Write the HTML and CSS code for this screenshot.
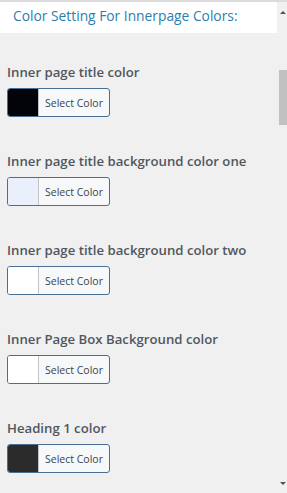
FILE: index.html
```html
<!DOCTYPE html>
<html>
<head>
<meta charset="utf-8">
<link rel="stylesheet" href="styles.css">
</head>
<body>
<div class="frame">
  <div class="main">
    <div class="header">Color Setting For Innerpage Colors:</div>
    <div class="field">
      <div class="label">Inner page title color</div>
      <button class="picker"><span class="swatch" style="background:#02040a"></span><span class="txt">Select Color</span></button>
    </div>
    <div class="field">
      <div class="label">Inner page title background color one</div>
      <button class="picker"><span class="swatch" style="background:#e9f0fb"></span><span class="txt">Select Color</span></button>
    </div>
    <div class="field">
      <div class="label">Inner page title background color two</div>
      <button class="picker"><span class="swatch" style="background:#ffffff"></span><span class="txt">Select Color</span></button>
    </div>
    <div class="field">
      <div class="label">Inner Page Box Background color</div>
      <button class="picker"><span class="swatch" style="background:#ffffff"></span><span class="txt">Select Color</span></button>
    </div>
    <div class="field">
      <div class="label">Heading 1 color</div>
      <button class="picker"><span class="swatch" style="background:#2b2b2b"></span><span class="txt">Select Color</span></button>
    </div>
  </div>
  <div class="scrollbar">
    <div class="arrow up"></div>
    <div class="thumb"></div>
    <div class="spacer"></div>
    <div class="arrow down"></div>
  </div>
</div>
</body>
</html>
```
FILE: styles.css
```css
html, body {
  margin: 0;
  padding: 0;
  background: #f0f0f1;
  height: 493px;
  overflow: hidden;
}
.frame {
  display: flex;
  height: 493px;
  border-top: 2px solid #dcdcde;
  box-sizing: border-box;
  font-family: "Open Sans", "Noto Sans", sans-serif;
}
.main {
  width: 277px;
  flex: none;
}
.header {
  background: #fff;
  height: 31px;
  box-sizing: border-box;
  padding: 5px 0 0 13px;
  color: #2a7fae;
  font-size: 13.8px;
  line-height: 18px;
}
.field {
  padding-left: 7px;
}
.label {
  color: #50575e;
  font-weight: 600;
  font-size: 13.2px;
  line-height: 18px;
  margin-bottom: 7px;
}
.field + .field {
  margin-top: 35px;
}
.field:nth-child(2) {
  padding-top: 30px;
}
.picker {
  display: flex;
  align-items: stretch;
  height: 29px;
  width: 103px;
  padding: 0;
  border: 1px solid #4a6f93;
  border-radius: 3px;
  background: #f6f8fa;
  overflow: hidden;
  font-family: inherit;
  cursor: pointer;
}
.swatch {
  width: 30px;
  flex: none;
  border-right: 1px solid #c3c4c7;
}
.txt {
  flex: 1;
  display: flex;
  align-items: center;
  justify-content: center;
  font-size: 10.5px;
  color: #3c434a;
}
.scrollbar {
  flex: 1;
  display: flex;
  flex-direction: column;
  align-items: flex-end;
}
.arrow {
  width: 8px;
  height: 20px;
  display: flex;
  justify-content: center;
  align-items: center;
}
.arrow.up::before {
  content: "";
  border-left: 3px solid transparent;
  border-right: 3px solid transparent;
  border-bottom: 3px solid #505050;
}
.arrow.down::before {
  content: "";
  border-left: 3px solid transparent;
  border-right: 3px solid transparent;
  border-top: 3px solid #505050;
}
.thumb {
  margin-top: 48px;
  width: 8px;
  height: 55px;
  background: #c1c1c1;
}
.spacer {
  flex: 1;
}
```
